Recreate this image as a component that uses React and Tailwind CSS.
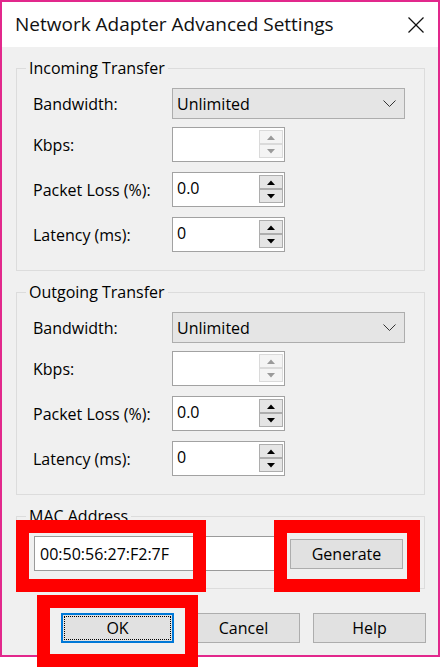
import React from 'react';

const font = { fontFamily: '"Open Sans", "Noto Sans", sans-serif' };

const Arrow = ({ dir, disabled }) => (
  <svg width="8" height="5" viewBox="0 0 8 5">
    {dir === 'up' ? (
      <polygon points="0,5 4,0.5 8,5" fill={disabled ? '#9a9a9a' : '#000'} />
    ) : (
      <polygon points="0,0 8,0 4,4.5" fill={disabled ? '#9a9a9a' : '#000'} />
    )}
  </svg>
);

const Spin = ({ value = '', disabled = false }) => {
  const btn = disabled
    ? 'flex h-[14px] w-[24px] items-center justify-center border border-[#dadada] bg-[#f4f4f4]'
    : 'flex h-[14px] w-[24px] items-center justify-center border border-[#adadad] bg-[#e5e5e5]';
  return (
    <div className="flex h-[35px] w-[113px] border border-[#a2a2a2] bg-white">
      <div className="flex-1 pl-[4px] pt-[3px] text-[16px] leading-[24px] text-black">{value}</div>
      <div className="flex flex-col pt-[2px] pr-[1px]">
        <div className={btn}>
          <Arrow dir="up" disabled={disabled} />
        </div>
        <div className={btn}>
          <Arrow dir="down" disabled={disabled} />
        </div>
      </div>
    </div>
  );
};

const Combo = () => (
  <div className="flex h-[31px] w-[233px] items-center justify-between border border-[#adadad] bg-[#e5e5e5] pl-[4px] pr-[8px]">
    <span className="text-[16px] leading-[22px] text-black">Unlimited</span>
    <svg width="13" height="8" viewBox="0 0 13 8">
      <polyline points="0.5,0.5 6.5,6.5 12.5,0.5" fill="none" stroke="#333" strokeWidth="1" />
    </svg>
  </div>
);

const Row = ({ label, children, className = '' }) => (
  <div className={`flex items-center ${className}`}>
    <div className="w-[139px] text-[16px] leading-[22px] text-black">{label}</div>
    {children}
  </div>
);

const Transfer = ({ title, className = '' }) => (
  <fieldset className={`ml-[14px] w-[409px] border border-[#dcdcdc] pb-[18px] ${className}`}>
    <legend className="ml-[9px] px-[3px] text-[16px] leading-[22px] text-black">{title}</legend>
    <div className="px-[16px] pt-[9px]">
      <Row label="Bandwidth:">
        <Combo />
      </Row>
      <Row label="Kbps:" className="mt-[8px]">
        <Spin disabled />
      </Row>
      <Row label="Packet Loss (%):" className="mt-[10px]">
        <Spin value="0.0" />
      </Row>
      <Row label="Latency (ms):" className="mt-[10px]">
        <Spin value="0" />
      </Row>
    </div>
  </fieldset>
);

const Button = ({ children, focused }) => (
  <div
    className={
      focused
        ? 'flex h-[30px] w-[113px] items-center justify-center border-2 border-[#0078d7] bg-[#e1e1e1] p-[1px]'
        : 'flex h-[30px] w-[113px] items-center justify-center border border-[#adadad] bg-[#e1e1e1]'
    }
  >
    {focused ? (
      <div className="flex h-full w-full items-center justify-center border border-dotted border-black text-[16px] text-black">
        {children}
      </div>
    ) : (
      <span className="text-[16px] text-black">{children}</span>
    )}
  </div>
);

export default function App() {
  return (
    <div className="relative h-[667px] w-[440px] bg-white" style={font}>
      <div className="flex h-[657px] w-[440px] flex-col border-2 border-[#e2288c]">
        {/* Title bar */}
        <div className="flex h-[45px] items-center justify-between bg-white pl-[13px] pr-[14px]">
          <span className="text-[19px] text-[#111]">Network Adapter Advanced Settings</span>
          <svg width="16" height="16" viewBox="0 0 16 16">
            <line x1="0.5" y1="0.5" x2="15.5" y2="15.5" stroke="#111" strokeWidth="1.3" />
            <line x1="15.5" y1="0.5" x2="0.5" y2="15.5" stroke="#111" strokeWidth="1.3" />
          </svg>
        </div>

        {/* Body */}
        <div className="flex-1 bg-[#f0f0f0] pt-[10px]">
          <Transfer title="Incoming Transfer" />
          <Transfer title="Outgoing Transfer" className="mt-[10px]" />

          <fieldset className="ml-[14px] mt-[10px] w-[409px] border border-[#dcdcdc] pb-[17px]">
            <legend className="ml-[9px] px-[3px] text-[16px] leading-[22px] text-black">MAC Address</legend>
            <div className="flex items-center pl-[17px] pt-[9px]">
              <div className="flex h-[35px] w-[241px] items-center border border-[#9a9a9a] bg-white pl-[5px] text-[16px] text-black">
                00:50:56:27:F2:7F
              </div>
              <div className="ml-[15px]">
                <Button>Generate</Button>
              </div>
            </div>
          </fieldset>

          <div className="mt-[24px] flex gap-[13px] pl-[59px]">
            <Button focused>OK</Button>
            <Button>Cancel</Button>
            <Button>Help</Button>
          </div>
        </div>
      </div>

      {/* Annotation boxes */}
      <div className="absolute left-[16px] top-[520px] h-[72px] w-[190px] border-[13px] border-[#ff0000]" />
      <div className="absolute left-[274px] top-[520px] h-[72px] w-[146px] border-[13px] border-[#ff0000]" />
      <div className="absolute left-[37px] top-[595px] h-[72px] w-[161px] border-[13px] border-[#ff0000]" />
    </div>
  );
}
